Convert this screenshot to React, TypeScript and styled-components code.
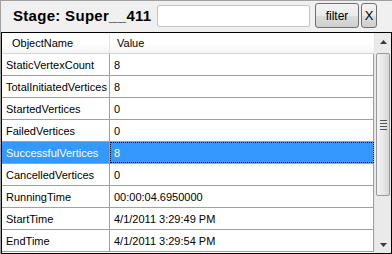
import React from "react";
import { styled, createGlobalStyle } from "styled-components";

const rows = [
  { name: "StaticVertexCount", value: "8" },
  { name: "TotalInitiatedVertices", value: "8" },
  { name: "StartedVertices", value: "0" },
  { name: "FailedVertices", value: "0" },
  { name: "SuccessfulVertices", value: "8", selected: true },
  { name: "CancelledVertices", value: "0" },
  { name: "RunningTime", value: "00:00:04.6950000" },
  { name: "StartTime", value: "4/1/2011 3:29:49 PM" },
  { name: "EndTime", value: "4/1/2011 3:29:54 PM" },
];

const GlobalStyle = createGlobalStyle`
  html, body {
    margin: 0;
    padding: 0;
    background: #f0f0f0;
  }
  * {
    box-sizing: border-box;
  }
`;

const App: React.FC = () => {
  return (
    <>
      <GlobalStyle />
      <Frame>
        <Toolbar>
          <Title>Stage: Super__411</Title>
          <FilterInput />
          <FilterBtn>filter</FilterBtn>
          <ClearBtn>X</ClearBtn>
        </Toolbar>

        <Grid>
          <Table>
            <HeaderRow>
              <HeadCell $first>ObjectName</HeadCell>
              <HeadCell>Value</HeadCell>
            </HeaderRow>
            {rows.map((item) => {
              return (
                <Row key={item.name} $selected={item.selected}>
                  <NameCell>{item.name}</NameCell>
                  <ValueCell $focused={item.selected}>{item.value}</ValueCell>
                </Row>
              );
            })}
          </Table>

          <Scrollbar>
            <ArrowBtn>
              <svg width="7" height="4" viewBox="0 0 7 4">
                <path d="M3.5 0 L7 4 L0 4 Z" fill="#3c3c3c" />
              </svg>
            </ArrowBtn>
            <Track>
              <Thumb>
                <Grip />
                <Grip />
                <Grip />
                <Grip />
              </Thumb>
            </Track>
            <ArrowBtn>
              <svg width="7" height="4" viewBox="0 0 7 4">
                <path d="M0 0 L7 0 L3.5 4 Z" fill="#3c3c3c" />
              </svg>
            </ArrowBtn>
          </Scrollbar>
        </Grid>
      </Frame>
    </>
  );
};

export default App;

const Frame = styled.div`
  width: 392px;
  height: 254px;
  display: flex;
  flex-direction: column;
  border-top: 1px solid #a0a0a0;
  border-left: 1px solid #a0a0a0;
  background: #f0f0f0;
  overflow: hidden;
`;

const Toolbar = styled.div`
  height: 31px;
  display: flex;
  align-items: center;
  padding-left: 12px;
`;

const Title = styled.div`
  font-family: "Liberation Sans", Arial, sans-serif;
  font-size: 15px;
  font-weight: bold;
  letter-spacing: 0.3px;
  color: #000;
  width: 144px;
  margin-top: -2px;
  white-space: nowrap;
`;

const FilterInput = styled.input`
  width: 153px;
  height: 22px;
  margin-top: -2px;
  border: 1px solid #c5c5c5;
  border-radius: 2px;
  background: #fff;
  outline: none;
`;

const Btn = styled.div`
  height: 25px;
  display: flex;
  align-items: center;
  justify-content: center;
  border: 1px solid #707070;
  border-radius: 3px;
  background: linear-gradient(#f2f2f2 0%, #ebebeb 50%, #dddddd 51%, #cfcfcf 100%);
  font-family: "Liberation Sans", Arial, sans-serif;
  font-size: 12px;
  color: #000;
  margin-top: -2px;
`;

const FilterBtn = styled(Btn)`
  width: 44px;
  margin-left: 5px;
`;

const ClearBtn = styled(Btn)`
  width: 16px;
  margin-left: 2px;
  font-size: 13px;
`;

const Grid = styled.div`
  height: 222px;
  display: flex;
  border: 1px solid #000;
  background: #fff;
`;

const Table = styled.div`
  flex: 1;
  display: flex;
  flex-direction: column;
  font-family: "Liberation Sans", Arial, sans-serif;
  font-size: 11px;
`;

const HeaderRow = styled.div`
  height: 21px;
  display: grid;
  grid-template-columns: 108px 1fr;
  background: linear-gradient(#ffffff 0%, #ffffff 50%, #f4f5f6 100%);
  border-bottom: 1px solid #d5d5d5;
`;

const HeadCell = styled.div<{ $first?: boolean }>`
  display: flex;
  align-items: center;
  padding-left: ${(p) => (p.$first ? "10px" : "7px")};
  border-right: 1px solid ${(p) => (p.$first ? "#e2e3e4" : "transparent")};
  color: #000;
`;

const Row = styled.div<{ $selected?: boolean }>`
  height: 22px;
  display: grid;
  grid-template-columns: 108px 1fr;
  background: ${(p) => (p.$selected ? "#3399ff" : "#fff")};
  color: ${(p) => (p.$selected ? "#fff" : "#000")};
  border-bottom: 1px solid #a0a0a0;
`;

const NameCell = styled.div`
  display: flex;
  align-items: center;
  padding-left: 4px;
  border-right: 1px solid #a0a0a0;
  white-space: nowrap;
`;

const ValueCell = styled.div<{ $focused?: boolean }>`
  display: flex;
  align-items: center;
  padding-left: 4px;
  border-right: 1px solid #a0a0a0;
  outline: ${(p) => (p.$focused ? "1px dotted #000" : "none")};
  outline-offset: -1px;
  white-space: nowrap;
`;

const Scrollbar = styled.div`
  width: 17px;
  display: flex;
  flex-direction: column;
  background: #eaeaea;
  border-left: 1px solid #e3e3e3;
`;

const ArrowBtn = styled.div`
  height: 17px;
  display: flex;
  align-items: center;
  justify-content: center;
`;

const Track = styled.div`
  flex: 1;
  display: flex;
  flex-direction: column;
  padding-top: 3px;
`;

const Thumb = styled.div`
  height: 143px;
  margin: 0 1px;
  display: flex;
  flex-direction: column;
  align-items: center;
  justify-content: center;
  gap: 2px;
  border: 1px solid #9a9a9a;
  border-radius: 2px;
  background: linear-gradient(90deg, #f3f3f3 0%, #e8e8e8 50%, #d6d6d6 100%);
`;

const Grip = styled.div`
  width: 7px;
  height: 1px;
  background: #555;
`;
